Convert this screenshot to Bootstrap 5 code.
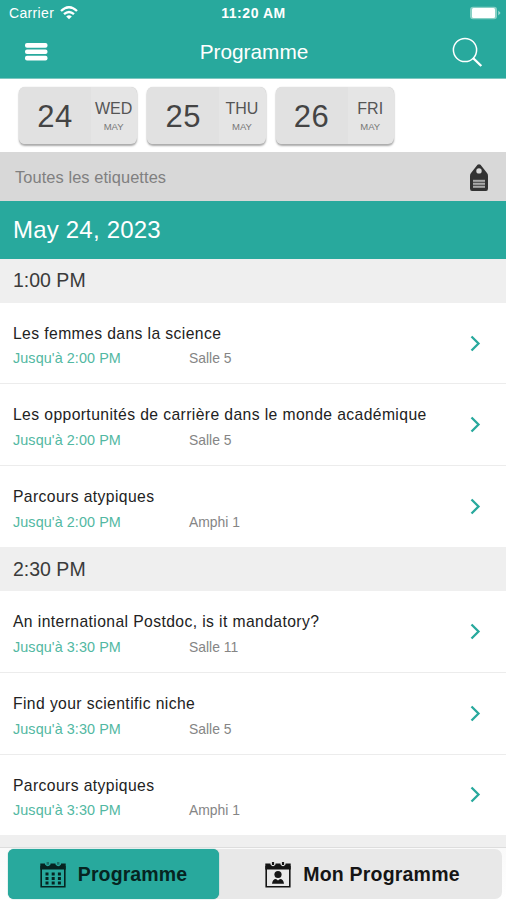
<!DOCTYPE html>
<html lang="fr">
<head>
<meta charset="utf-8">
<meta name="viewport" content="width=device-width, initial-scale=1">
<title>Programme</title>
<link rel="stylesheet" href="https://cdn.jsdelivr.net/npm/bootstrap@5.3.0/dist/css/bootstrap.min.css">
<style>
:root{--teal:#28a99d}
body{font-family:"Liberation Sans",Arial,sans-serif;width:506px;height:900px;line-height:1;color:#333}
.bg-teal{background:var(--teal)}
.top{height:79px;border-bottom:1px solid #7cc7c0}
.status{height:26px;font-size:14px;padding:0 5px 0 9px}
.status>*{flex:1 1 0}
.carrier{letter-spacing:.35px}
.clock{letter-spacing:.55px;padding-right:3px}
.bar{height:52px;padding:0 23px 0 25px}
.bar h1{font-size:20.8px;line-height:1;padding:0 0 0 8px}
.days{height:73px;padding:8px 19px 0;gap:10px}
.day{width:118.3px;height:57px;border-radius:6px;background:#e5e5e5;box-shadow:0 2px 2px #aaa,0 0 1px #bbb}
.num{width:72px;font-size:31px;letter-spacing:.6px;background:#e1e1e1;color:#444;border-radius:6px 0 0 6px;padding-top:2px}
.wk{font-size:16px;color:#555;padding:14px 1px 0 0}
.mon{font-size:9.5px;color:#777;margin-top:5px}
.tags{height:49px;background:#d8d8d8;padding:2px 17px 0 15px;font-size:16.4px;letter-spacing:.08px;color:#808080}
.date{height:58px;padding-left:13px;font-size:24px;letter-spacing:.2px}
.hour{height:43.8px;background:#efefef;padding-left:13px;font-size:19.5px;color:#3b3b3b}
.talk{height:81.6px;padding:6px 25px 0 13px;border-bottom:1px solid #ececec}
.talk.end{border-bottom-color:#efefef}
.ttl{font-size:15.7px;letter-spacing:.4px;color:#222;margin-bottom:10px}
.sub{font-size:14.4px;color:#858585}
.until{width:176px;letter-spacing:.08px;color:#52b8a2}
.sub span+span{font-size:13.9px}
.talk svg{margin-top:-6px}
.tabs{height:53px;padding:1px 4px 0 8px;border-top:1px solid #ddd;background:linear-gradient(#fafafa,#fff)}
.pill{background:#e8e8e8;border-radius:7px;height:50px}
.tab{font-size:19.5px;font-weight:700;color:#151515;gap:12px;padding-top:1px}
.tab.on{width:211px;border-radius:6px;background:var(--teal);color:#062421;box-shadow:0 0 1px #168c81}
.tab span{letter-spacing:.12px}
.tab.mine{padding-left:4px}
.tab.mine span{letter-spacing:.2px}
</style>
<script src="https://cdn.jsdelivr.net/npm/bootstrap@5.3.0/dist/js/bootstrap.bundle.min.js"></script>
</head>
<body class="bg-white overflow-hidden d-flex flex-column">
<header class="top bg-teal text-white flex-shrink-0">
  <div class="status d-flex align-items-center">
    <div class="d-flex align-items-center" style="gap:6px"><span class="carrier">Carrier</span>
      <svg width="18" height="14" viewBox="0 0 18 14" fill="none" stroke="#fff" stroke-width="2.3"><path d="M1 5Q9-2.600 17 5M4 8.200Q9 3.700 14 8.200"/><path d="M9 13.200 6.200 10.400Q9 8.200 11.800 10.400Z" fill="#fff" stroke="none"/></svg></div>
    <div class="clock text-center fw-bold text-nowrap">11:20 AM</div>
    <div class="d-flex justify-content-end"><svg width="32" height="14" viewBox="0 0 32 14"><rect x="1" y=".7" width="27" height="12.6" rx="3" fill="#88d0c5"/><rect x="3" y="2" width="23" height="10" rx="1.5" fill="#fff"/><path d="M29.300 4.500 31.500 7l-2.200 2.500z" fill="#a4dbd3"/></svg></div>
  </div>
  <div class="bar d-flex align-items-center justify-content-between">
    <svg width="23" height="18" viewBox="0 0 23 18" fill="#fff"><rect width="22.5" height="4.8" rx="2"/><rect y="6.4" width="22.5" height="4.6" rx="2"/><rect y="12.7" width="22.5" height="4.8" rx="2"/></svg>
    <h1 class="m-0 fw-normal">Programme</h1>
    <svg width="31" height="31" viewBox="0 0 31 31" fill="none" stroke="#fff"><circle cx="13" cy="13" r="11.6" stroke-width="1.500"/><path d="m21 21 8.300 8" stroke-width="2.400"/></svg>
  </div>
</header>
<nav class="days d-flex flex-shrink-0">
  <div class="day d-flex"><div class="num d-flex align-items-center justify-content-center">24</div><div class="wk flex-fill text-center">WED<div class="mon">MAY</div></div></div>
  <div class="day d-flex"><div class="num d-flex align-items-center justify-content-center">25</div><div class="wk flex-fill text-center">THU<div class="mon">MAY</div></div></div>
  <div class="day d-flex"><div class="num d-flex align-items-center justify-content-center">26</div><div class="wk flex-fill text-center">FRI<div class="mon">MAY</div></div></div>
</nav>
<div class="tags d-flex align-items-center justify-content-between flex-shrink-0">
  <span>Toutes les etiquettes</span>
  <svg width="20" height="28" viewBox="0 0 20 28"><path fill="#333" fill-rule="evenodd" d="M8.500.8Q10-.4 11.500.8L18 9q1 1.200 1 3v12.500Q19 27 17 27H3q-2 0-2-2.500V12q0-1.800 1-3ZM10 4.200a2.700 2.700 0 1 0 0 5.400 2.700 2.700 0 0 0 0-5.400Z"/><path d="M4 15.800h12v8H4z" fill="#aaa"/><path d="M4 18.300h12M4 21.300h12" stroke="#444" stroke-width="1"/></svg>
</div>
<div class="date bg-teal text-white d-flex align-items-center flex-shrink-0">May 24, 2023</div>
<main class="flex-fill overflow-hidden">
  <div class="hour d-flex align-items-center">1:00 PM</div>
  <div class="talk d-flex align-items-center justify-content-between"><div><div class="ttl">Les femmes dans la science</div><div class="sub d-flex align-items-baseline"><span class="until">Jusqu'à 2:00 PM</span><span>Salle 5</span></div></div><svg width="11" height="17" viewBox="0 0 11 17" fill="none" stroke="#28a99d" stroke-width="2.300"><path d="m1.500 1.500 7 7-7 7"/></svg></div>
  <div class="talk d-flex align-items-center justify-content-between"><div><div class="ttl">Les opportunités de carrière dans le monde académique</div><div class="sub d-flex align-items-baseline"><span class="until">Jusqu'à 2:00 PM</span><span>Salle 5</span></div></div><svg width="11" height="17" viewBox="0 0 11 17" fill="none" stroke="#28a99d" stroke-width="2.300"><path d="m1.500 1.500 7 7-7 7"/></svg></div>
  <div class="talk end d-flex align-items-center justify-content-between"><div><div class="ttl">Parcours atypiques</div><div class="sub d-flex align-items-baseline"><span class="until">Jusqu'à 2:00 PM</span><span>Amphi 1</span></div></div><svg width="11" height="17" viewBox="0 0 11 17" fill="none" stroke="#28a99d" stroke-width="2.300"><path d="m1.500 1.500 7 7-7 7"/></svg></div>
  <div class="hour d-flex align-items-center">2:30 PM</div>
  <div class="talk d-flex align-items-center justify-content-between"><div><div class="ttl">An international Postdoc, is it mandatory?</div><div class="sub d-flex align-items-baseline"><span class="until">Jusqu'à 3:30 PM</span><span>Salle 11</span></div></div><svg width="11" height="17" viewBox="0 0 11 17" fill="none" stroke="#28a99d" stroke-width="2.300"><path d="m1.500 1.500 7 7-7 7"/></svg></div>
  <div class="talk d-flex align-items-center justify-content-between"><div><div class="ttl">Find your scientific niche</div><div class="sub d-flex align-items-baseline"><span class="until">Jusqu'à 3:30 PM</span><span>Salle 5</span></div></div><svg width="11" height="17" viewBox="0 0 11 17" fill="none" stroke="#28a99d" stroke-width="2.300"><path d="m1.500 1.500 7 7-7 7"/></svg></div>
  <div class="talk end d-flex align-items-center justify-content-between"><div><div class="ttl">Parcours atypiques</div><div class="sub d-flex align-items-baseline"><span class="until">Jusqu'à 3:30 PM</span><span>Amphi 1</span></div></div><svg width="11" height="17" viewBox="0 0 11 17" fill="none" stroke="#28a99d" stroke-width="2.300"><path d="m1.500 1.500 7 7-7 7"/></svg></div>
  <div class="hour"></div>
</main>
<footer class="tabs flex-shrink-0">
  <div class="pill d-flex">
    <div class="tab on d-flex align-items-center justify-content-center">
      <svg width="26" height="26" viewBox="0 0 26 26"><path d="M1.200 4v20.800h23.600V4" fill="none" stroke="#062421" stroke-width="1.600"/><path d="M.3 1.500h25.400V7.500H.3z" fill="#062421"/><path d="M5 1h5.500v1.500q-2.700 3.500-5.500 0zM15.500 1h5.500v1.500q-2.700 3.500-5.500 0z" fill="#28a99d"/><path d="M7.800 0v2.800M18.200 0v2.800" stroke="#1b7168" stroke-width="2.400"/><path d="M5.500 12h16M5.500 16.500h16M5.500 21h16" stroke="#062421" stroke-width="2.800" stroke-dasharray="3 3.200"/></svg>
      <span>Programme</span></div>
    <div class="tab mine flex-fill d-flex align-items-center justify-content-center">
      <svg width="26" height="26" viewBox="0 0 26 26"><path d="M1.200 4v20.800h23.600V4" fill="none" stroke="#151515" stroke-width="1.600"/><path d="M.3 1.500h25.400V7.500H.3z" fill="#151515"/><path d="M5.500 0v2.500q2.500 3.500 5 0V0zM15.500 0v2.500q2.500 3.500 5 0V0z" fill="#e8e8e8"/><path d="M8 0v3M18 0v3" stroke="#151515" stroke-width="2.200"/><circle cx="13" cy="12.500" r="3.600" fill="#151515"/><path d="M7 21.800q.5-4.800 4-4.800l2 1.500 2-1.500q3.500 0 4 4.800z" fill="#151515"/></svg>
      <span>Mon Programme</span></div>
  </div>
</footer>
</body>
</html>
